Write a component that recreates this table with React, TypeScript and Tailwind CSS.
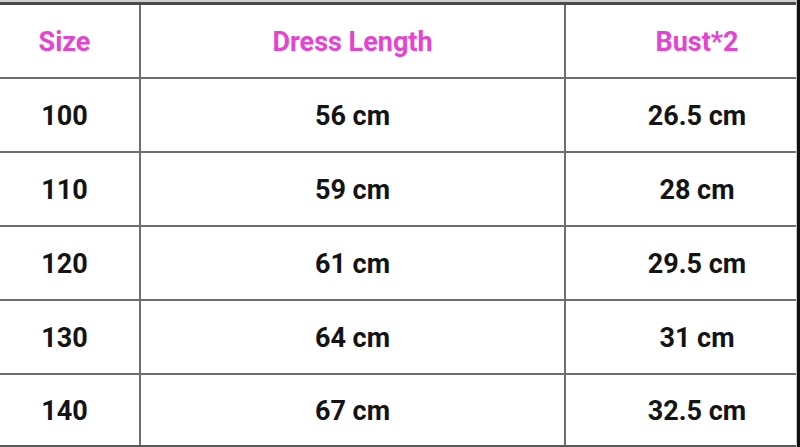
import React from "react";

const rows = [
  ["100", "56 cm", "26.5 cm"],
  ["110", "59 cm", "28 cm"],
  ["120", "61 cm", "29.5 cm"],
  ["130", "64 cm", "31 cm"],
  ["140", "67 cm", "32.5 cm"],
];

function Row({ cells, header, last }: { cells: string[]; header?: boolean; last?: boolean }) {
  const color = header ? "text-[#e544cf]" : "text-[#141414]";
  return (
    <div
      className={`flex ${last ? "h-[72px]" : "h-[74px]"} border-b-[2px] ${last ? "border-[#5a5a5a]" : "border-[#6e6e6e]"}`}
    >
      <div className={`w-[141px] flex items-center justify-center pr-[10px] pt-[2px] border-r-[2px] border-[#6e6e6e] ${color}`}>
        {cells[0]}
      </div>
      <div className={`w-[425px] flex items-center justify-center pt-[2px] border-r-[2px] border-[#6e6e6e] ${color}`}>
        {cells[1]}
      </div>
      <div className={`flex-1 flex items-center justify-center pl-[32px] pt-[2px] ${color}`}>{cells[2]}</div>
    </div>
  );
}

export default function App() {
  return (
    <div
      className="w-[800px] h-[447px] bg-white overflow-hidden flex"
      style={{ fontFamily: "Roboto, 'Noto Sans', sans-serif" }}
    >
      <div className="flex-1 flex flex-col text-[27px] font-bold leading-none">
        <div className="h-[2px] bg-[#cfcfcf]" />
        <div className="h-[3px] bg-[#4a4a4a]" />
        <Row cells={["Size", "Dress Length", "Bust*2"]} header />
        {rows.map((r, i) => (
          <Row key={r[0]} cells={r} last={i === rows.length - 1} />
        ))}
      </div>
      <div className="w-[1px] bg-[#c8c8c8]" />
      <div className="w-[3px] bg-[#111]" />
    </div>
  );
}
